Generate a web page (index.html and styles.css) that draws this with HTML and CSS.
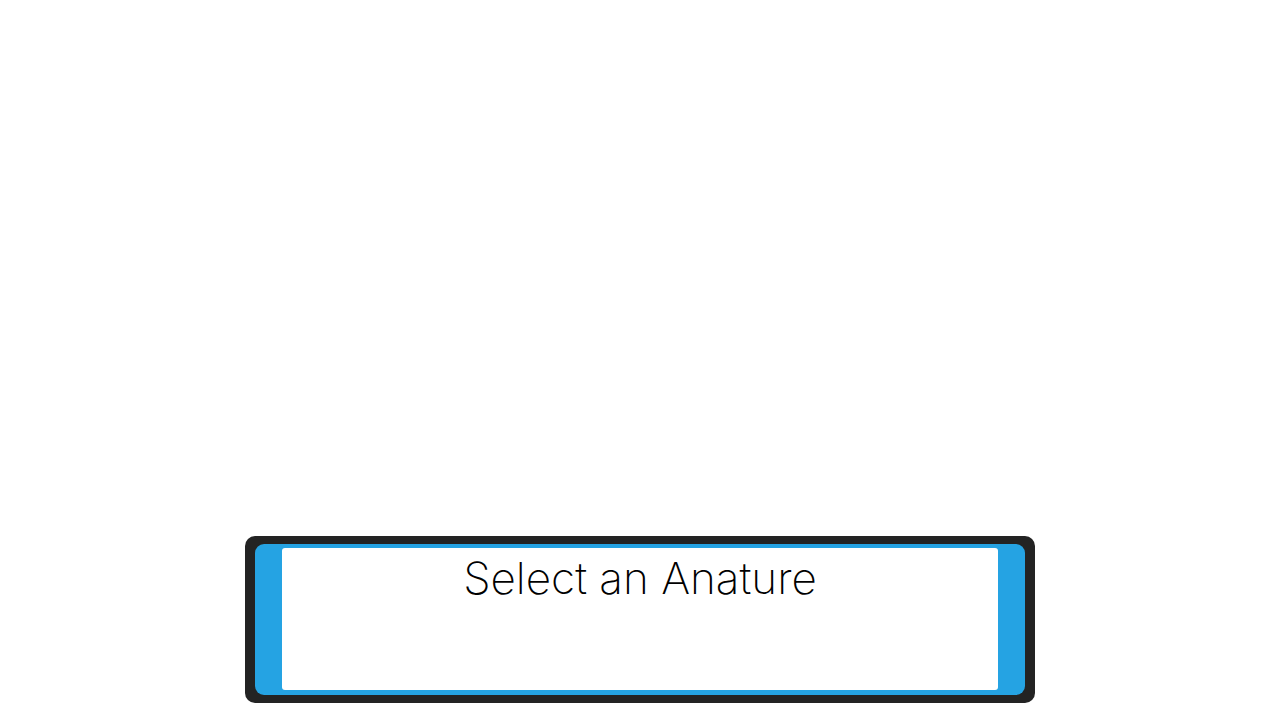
FILE: index.html
```html
<!DOCTYPE html>
<html>
<head>
<meta charset="utf-8">
<link rel="stylesheet" href="styles.css">
</head>
<body>
<div class="stage">
  <div class="dialog">
    <div class="dialog-blue">
      <div class="dialog-panel">
        <div class="dialog-title">Select an Anature</div>
      </div>
    </div>
  </div>
</div>
</body>
</html>
```
FILE: styles.css
```css
html, body {
  margin: 0;
  padding: 0;
  background: #ffffff;
}
.stage {
  width: 1280px;
  height: 720px;
  display: flex;
  flex-direction: column;
  align-items: center;
  justify-content: flex-end;
  padding-bottom: 17px;
  box-sizing: border-box;
}
.dialog {
  width: 790px;
  height: 167px;
  background: #232323;
  border-radius: 10px;
  padding: 8px 10px;
  box-sizing: border-box;
}
.dialog-blue {
  height: 100%;
  background: #25a3e3;
  border-radius: 9px;
  padding: 4px 27px 5px 27px;
  box-sizing: border-box;
}
.dialog-panel {
  height: 100%;
  background: #ffffff;
  border-radius: 3px;
  padding-top: 8px;
  box-sizing: border-box;
}
.dialog-title {
  font-family: "Inter", "Liberation Sans", Arial, sans-serif;
  font-weight: 200;
  font-size: 44px;
  line-height: 45px;
  color: #000;
  text-align: center;
}
```
